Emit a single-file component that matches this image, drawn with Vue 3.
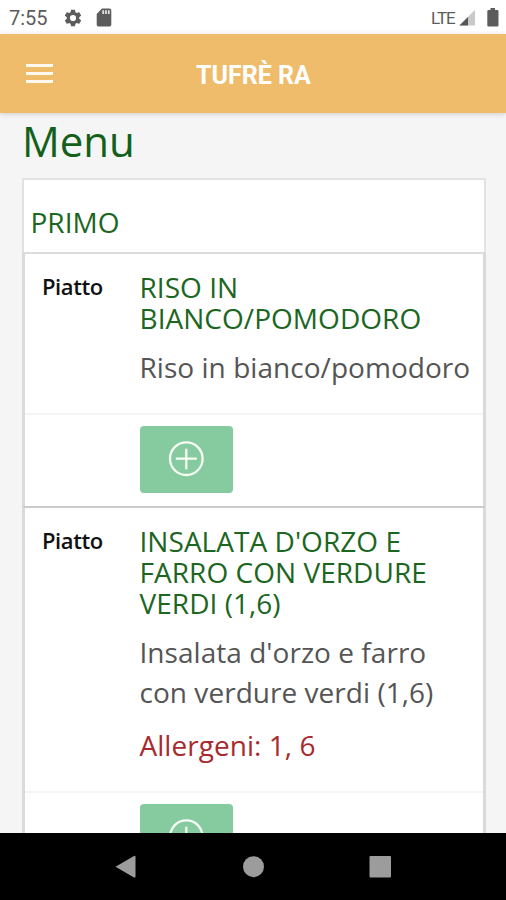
<script setup>
const dishes = [
  {
    lines: ['RISO IN', 'BIANCO/POMODORO'],
    description: ['Riso in bianco/pomodoro'],
  },
  {
    lines: ["INSALATA D'ORZO E", 'FARRO CON VERDURE', 'VERDI (1,6)'],
    description: ["Insalata d'orzo e farro", 'con verdure verdi (1,6)'],
    allergens: '1, 6',
  },
]
</script>

<template>
  <div class="phone">
    <div class="status">
      <span class="clock">7:55</span>
      <svg class="gear" width="20" height="20" viewBox="0 0 24 24">
        <path fill="#5c5c5c" fill-rule="evenodd" d="M19.43 12.98c.04-.32.07-.64.07-.98s-.03-.66-.07-.98l2.11-1.65c.19-.15.24-.42.12-.64l-2-3.46c-.12-.22-.39-.3-.61-.22l-2.49 1c-.52-.4-1.08-.73-1.69-.98l-.38-2.65C14.46 2.18 14.25 2 14 2h-4c-.25 0-.46.18-.49.42l-.38 2.65c-.61.25-1.17.59-1.69.98l-2.49-1c-.23-.09-.49 0-.61.22l-2 3.46c-.13.22-.07.49.12.64l2.11 1.65c-.04.32-.07.65-.07.98s.03.66.07.98l-2.11 1.65c-.19.15-.24.42-.12.64l2 3.46c.12.22.39.3.61.22l2.49-1c.52.4 1.08.73 1.69.98l.38 2.65c.03.24.24.42.49.42h4c.25 0 .46-.18.49-.42l.38-2.65c.61-.25 1.17-.59 1.69-.98l2.49 1c.23.09.49 0 .61-.22l2-3.46c.12-.22.07-.49-.12-.64l-2.11-1.65zM12 15.7a3.7 3.7 0 1 1 0-7.4 3.7 3.7 0 0 1 0 7.4z" />
      </svg>
      <svg class="sd" width="16" height="19" viewBox="0 0 16 19">
        <path fill="#5c5c5c" d="M6 .5h7.500a1.800 1.800 0 0 1 1.800 1.800v14.400a1.800 1.800 0 0 1-1.800 1.800h-11a1.800 1.800 0 0 1-1.800-1.800V6z" />
        <path stroke="#e0e0e0" stroke-width="1.800" d="M7.200 2.300v3.700M10 2.300v3.700M12.800 2.300v3.700" />
      </svg>
      <span class="lte">LTE</span>
      <svg class="signal" width="17" height="17" viewBox="0 0 17 17">
        <path fill="#c9c9c9" d="M16 1v15.500H0z" />
        <path fill="#555" d="M9 8v8.500H.5z" />
      </svg>
      <svg class="battery" width="12" height="19" viewBox="0 0 12 19">
        <path fill="#5c5c5c" d="M3.500 0h4.500v2h2.200a1.300 1.300 0 0 1 1.300 1.300v13.900a1.300 1.300 0 0 1-1.300 1.300H1.600a1.300 1.300 0 0 1-1.300-1.300V3.300A1.300 1.300 0 0 1 1.600 2h1.900z" />
      </svg>
    </div>

    <header class="appbar">
      <div class="burger"><i></i><i></i><i></i></div>
      <div class="brand">TUFRÈ RA</div>
    </header>

    <main class="content">
      <h1>Menu</h1>
      <section class="card">
        <h2>PRIMO</h2>
        <article v-for="(dish, n) in dishes" :key="n" class="dish">
          <div class="row info">
            <span class="label">Piatto</span>
            <div class="text">
              <h3><span v-for="l in dish.lines" :key="l">{{ l }}</span></h3>
              <p class="description"><span v-for="l in dish.description" :key="l">{{ l }}</span></p>
              <p v-if="dish.allergens" class="allergens">Allergeni: {{ dish.allergens }}</p>
            </div>
          </div>
          <div class="row actions">
            <button class="add" aria-label="+">
              <svg width="36" height="36" viewBox="0 0 36 36" fill="none" stroke="#f6fff4" stroke-width="2.300">
                <circle cx="18.300" cy="17.700" r="16.300" />
                <path d="M18.300 7.700v20.500M7.800 17.700h21" />
              </svg>
            </button>
          </div>
        </article>
      </section>
    </main>

    <nav class="navbar">
      <svg width="506" height="66" viewBox="0 0 506 66" fill="#9c9c9c">
        <path d="M115.500 33.700 134 23q1.500-.6 1.500 1v19.400q0 1.600-1.500 1z" />
        <circle cx="253.500" cy="33.700" r="10.500" />
        <rect x="369.500" y="23" width="21.500" height="21.500" rx="1" />
      </svg>
    </nav>
  </div>
</template>

<style>
body {
  margin: 0;
  overflow: hidden;
}
</style>

<style scoped>
.phone {
  width: 506px;
  height: 900px;
  display: flex;
  flex-direction: column;
  overflow: hidden;
  background: #f5f5f5;
  font-family: 'Open Sans', sans-serif;
}
.status {
  height: 34px;
  flex: none;
  display: flex;
  align-items: center;
  box-sizing: border-box;
  padding: 1px 7px 0 9px;
  background: #fff;
  color: #5c5c5c;
  font-family: Roboto, sans-serif;
}
.clock {
  width: 40px;
  font-size: 20px;
  line-height: 34px;
  white-space: nowrap;
}
.gear {
  margin-left: 14px;
}
.sd {
  margin-left: 13.4px;
}
.lte {
  margin-left: auto;
  font-size: 17px;
  letter-spacing: -1.1px;
}
.signal {
  margin-left: 4.5px;
}
.battery {
  margin-left: 11px;
}
.appbar {
  position: relative;
  height: 79px;
  flex: none;
  display: grid;
  grid-template-columns: 81px 1fr 80px;
  align-items: center;
  background: #efbc6b;
  box-shadow: 0 1px 5px rgba(80, 50, 60, 0.22);
}
.burger {
  display: flex;
  flex-direction: column;
  gap: 5px;
  width: 27px;
  margin-left: 26px;
}
.burger i {
  height: 2.7px;
  background: #fffaf0;
}
.brand {
  text-align: center;
  color: #fff;
  font-family: Roboto, sans-serif;
  font-size: 25px;
  font-weight: 700;
  padding-top: 3px;
}
.content {
  flex: 1;
  min-height: 0;
  overflow: hidden;
  padding: 0 20px 0 22px;
}
h1,
h2,
h3,
p {
  margin: 0;
  font-weight: 400;
}
h1 {
  height: 65px;
  font-size: 42px;
  line-height: 55px;
  color: #14601a;
}
.card {
  background: #fff;
  border: 2px solid #e2e2e2;
  border-bottom: 0;
}
h2 {
  height: 72px;
  box-sizing: border-box;
  padding: 23px 0 0 6.5px;
  font-size: 28px;
  line-height: 38px;
  color: #1c6622;
}
.dish {
  margin: 0 -2px;
  border: 3px solid #dadada;
  border-top: 2px solid #dcdcdc;
  border-bottom: 0;
}
.dish + .dish {
  border-top-color: #cacaca;
}
.row {
  display: grid;
  grid-template-columns: 97.5px 1fr;
  padding-left: 17px;
}
.info {
  padding-top: 18px;
  padding-bottom: 25px;
  border-bottom: 2px solid #f4f4f4;
}
.label {
  font-size: 22px;
  font-weight: 600;
  line-height: 28px;
  letter-spacing: -0.4px;
  color: #111;
}
h3 {
  font-size: 28px;
  line-height: 31px;
  letter-spacing: 0.04px;
  color: #1c6622;
}
h3 span,
.description span {
  display: block;
  white-space: nowrap;
}
.description,
.allergens {
  margin-top: 14px;
  font-size: 28px;
  line-height: 39.5px;
  letter-spacing: 0.04px;
  color: #555;
}
.allergens {
  color: #a82a2e;
}
.actions {
  padding-top: 11px;
  padding-bottom: 13.5px;
}
.add {
  grid-column: 2;
  width: 93px;
  height: 67px;
  padding: 0;
  display: flex;
  align-items: center;
  justify-content: center;
  border: 0;
  border-radius: 4px;
  background: #86ca9f;
}
.navbar {
  height: 67px;
  flex: none;
  background: #000;
}
.navbar svg {
  display: block;
}
</style>
